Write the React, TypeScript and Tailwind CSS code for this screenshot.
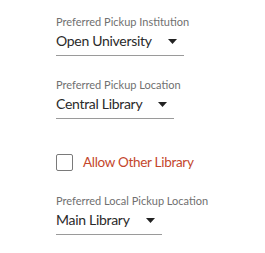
import React from 'react';

const Caret = () => (
  <svg width="9" height="5" viewBox="0 0 9 5" className="ml-4 mr-[7px] shrink-0">
    <path d="M0 0H9L4.5 5Z" fill="#222" />
  </svg>
);

const PickupSelect = ({ label, value }: { label: string; value: string }) => (
  <div className="flex flex-col items-start">
    <span className="text-[11px] leading-[14px] text-[#707070]">{label}</span>
    <div className="mt-[3px] flex items-center border-b border-[#9a9a9a] pb-[5px]">
      <span className="text-[14px] leading-[18px] tracking-[-0.3px] text-[#2a2a2a]">{value}</span>
      <Caret />
    </div>
  </div>
);

export default function App() {
  return (
    <div
      className="w-[265px] h-[253px] bg-white pl-[56px] pt-[15px]"
      style={{ fontFamily: 'Lato, "Open Sans", sans-serif' }}
    >
      <PickupSelect label="Preferred Pickup Institution" value="Open University" />
      <div className="mt-[22px]">
        <PickupSelect label="Preferred Pickup Location" value="Central Library" />
      </div>
      <label className="mt-[34px] flex items-center gap-[10px]">
        <span className="block h-[17px] w-[17px] rounded-[2px] border border-[#7a7a7a] bg-white" />
        <span className="text-[13.5px] leading-[18px] tracking-[-0.3px] text-[#c4462b]">Allow Other Library</span>
      </label>
      <div className="mt-[23px]">
        <PickupSelect label="Preferred Local Pickup Location" value="Main Library" />
      </div>
    </div>
  );
}
